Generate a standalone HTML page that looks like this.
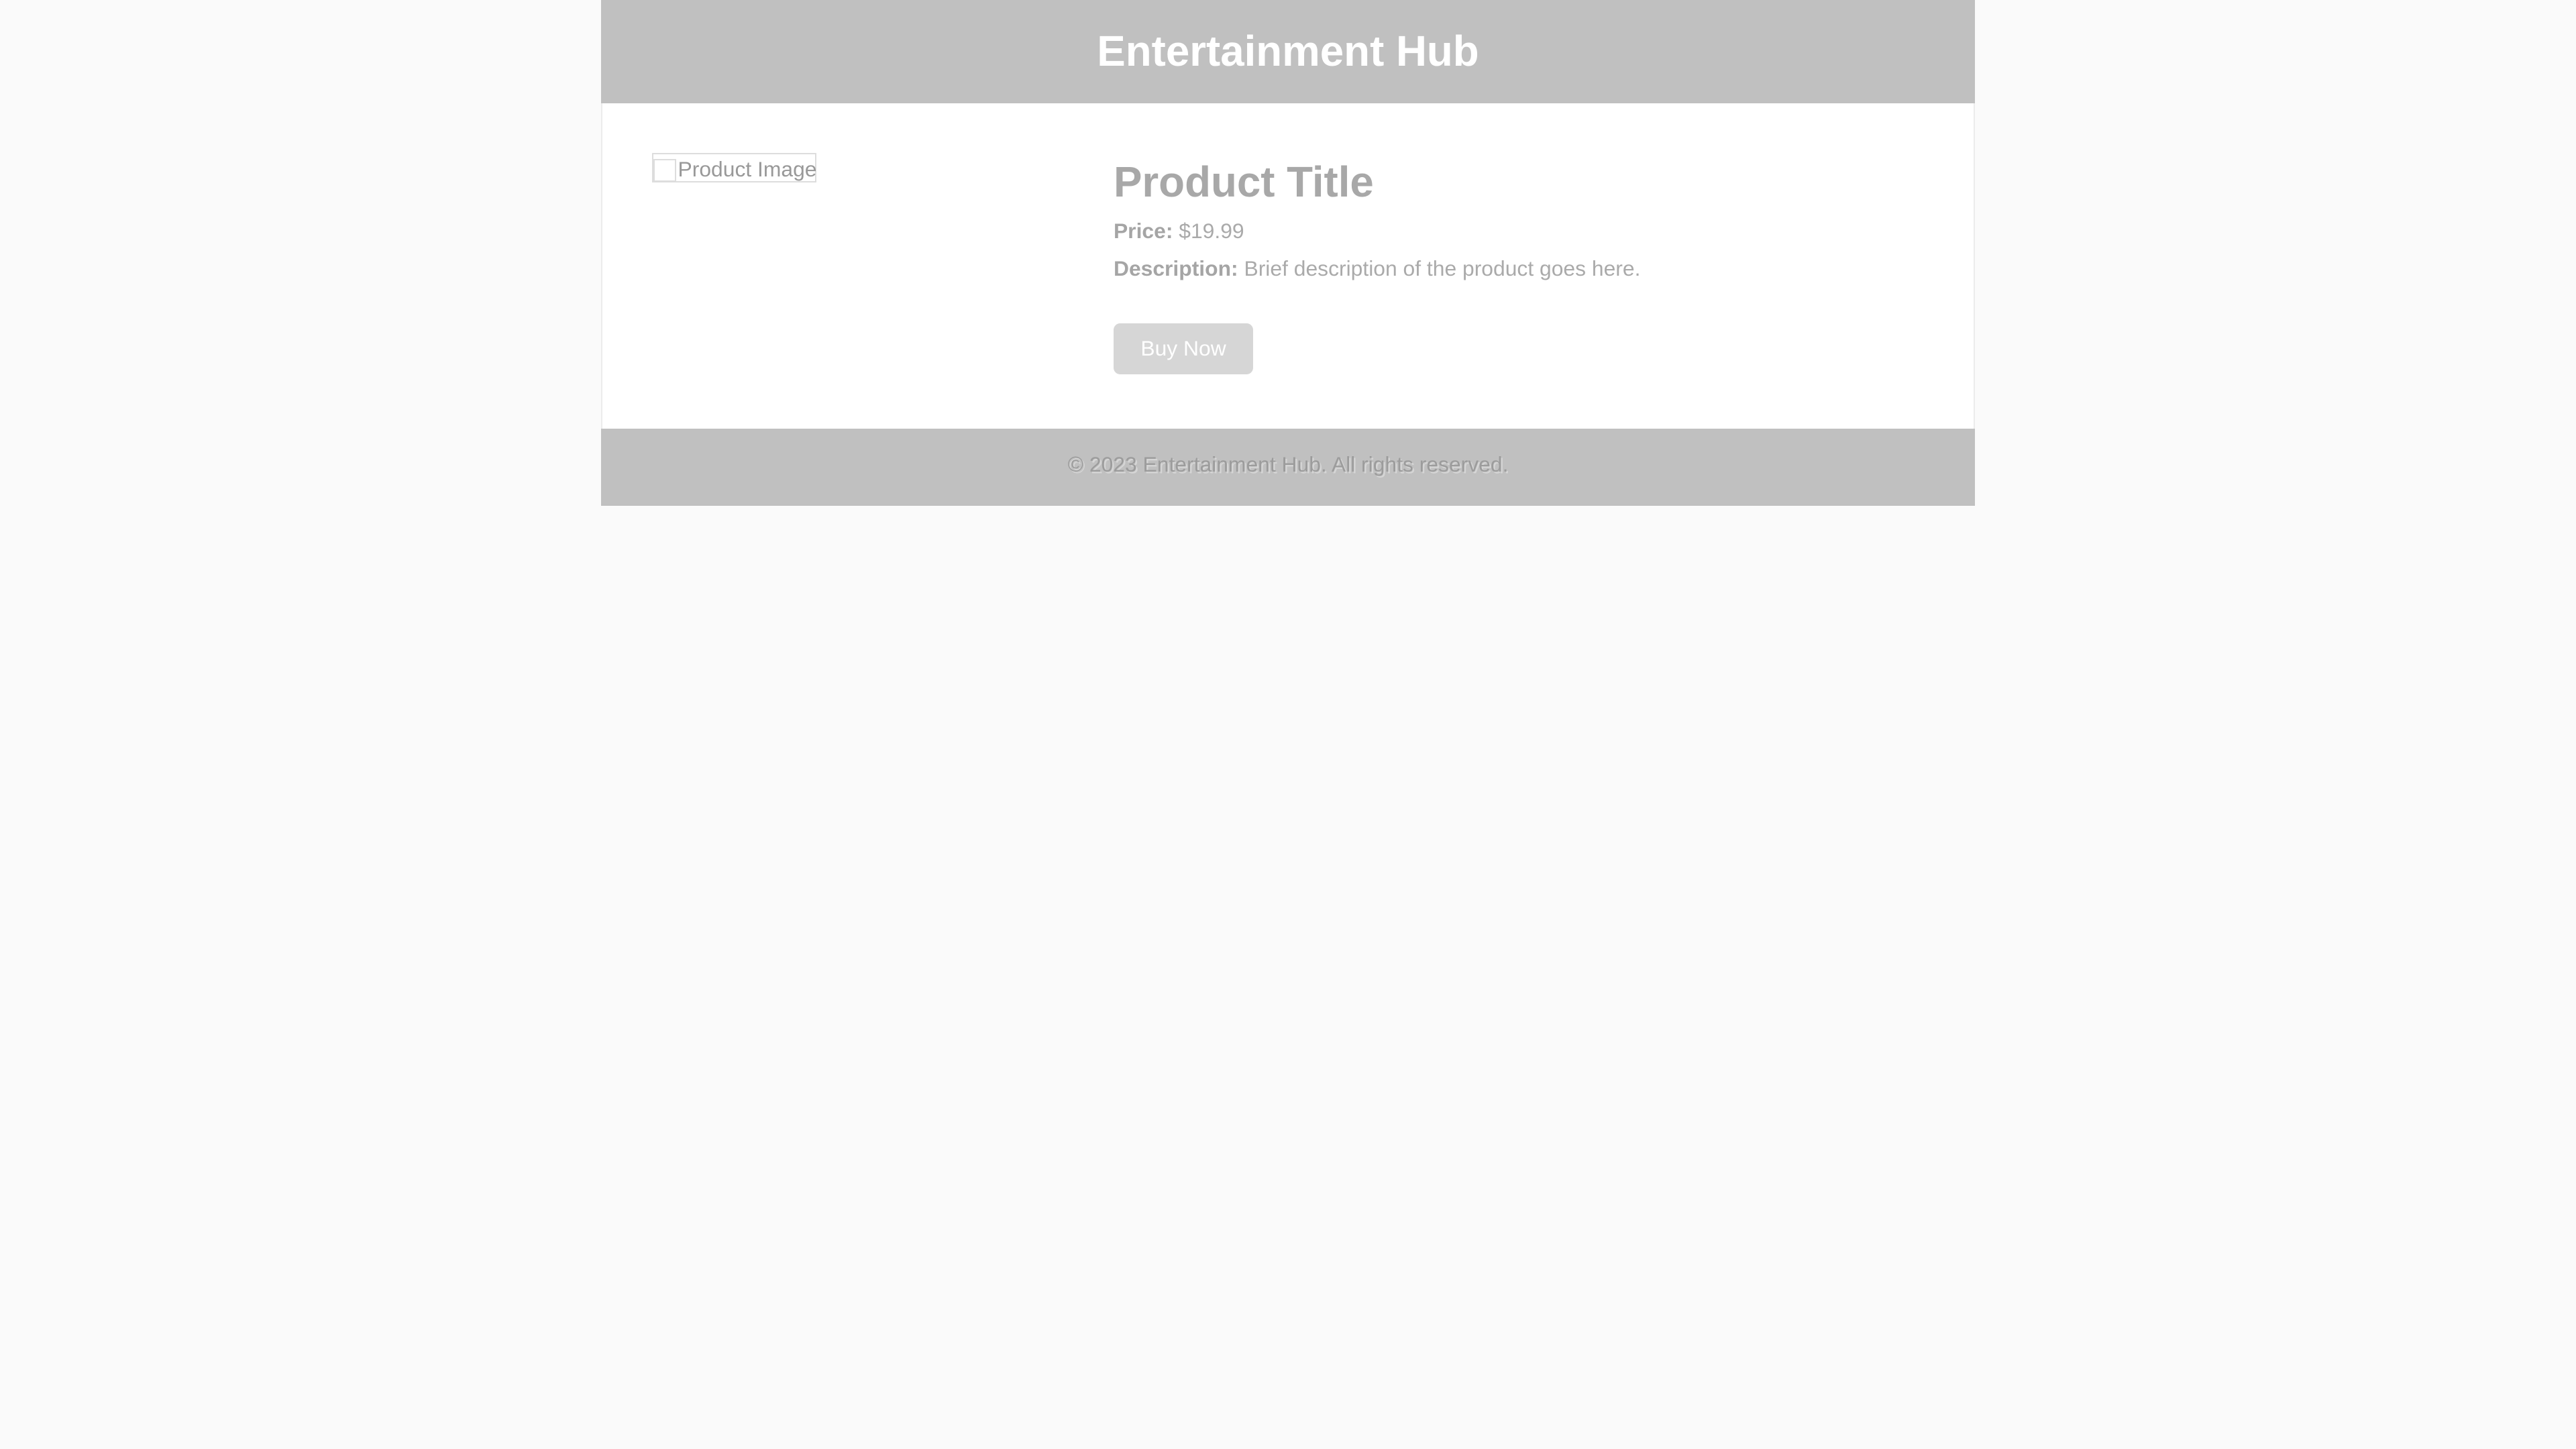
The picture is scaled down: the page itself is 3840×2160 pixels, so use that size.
<!DOCTYPE html>
<html><head><meta charset="utf-8"><style>
html,body{margin:0;padding:0;background:#fafafa;}
body{width:3840px;height:2160px;overflow:hidden;font-family:"Liberation Sans",Arial,sans-serif;}
.wrap{zoom:2.449;width:1568px;height:882px;position:relative;}
.c{position:absolute;left:366px;width:836px;top:0;}
.h{height:63px;background:#c0c0c0;color:#fff;text-align:center;font-weight:bold;font-size:26px;line-height:63px;}
.m{height:198px;background:#fff;border-left:1px solid #ececec;border-right:1px solid #ececec;box-sizing:border-box;position:relative;}
.img{position:absolute;left:30px;top:30px;width:100px;height:18px;border:1px solid #ddd;box-sizing:border-box;color:#999;font-size:13px;line-height:18px;white-space:nowrap;overflow:visible;}
.img span{display:inline-block;width:14px;height:14px;border:1px solid #ddd;vertical-align:middle;margin-right:1px;box-sizing:border-box;}
.t{position:absolute;left:311px;top:33px;font-size:26px;font-weight:bold;color:#a8a8a8;}
.p{position:absolute;left:311px;font-size:13px;color:#aaa;}
.p b{color:#a5a5a5;}
.btn{position:absolute;left:311px;top:134px;width:85px;height:31px;background:#d6d6d6;border-radius:4px;color:#fff;font-size:13px;line-height:31px;text-align:center;}
.f{height:47px;background:#c0c0c0;color:#9c9c9c;text-align:center;font-size:13px;line-height:44px;text-shadow:1px 1px 0 #d5d5d5;}
</style></head><body><div class="wrap"><div class="c">
<div class="h">Entertainment Hub</div>
<div class="m">
<div class="img"><span></span>Product Image</div>
<div class="t">Product Title</div>
<div class="p" style="top:70px"><b>Price:</b> $19.99</div>
<div class="p" style="top:93px"><b>Description:</b> Brief description of the product goes here.</div>
<div class="btn">Buy Now</div>
</div>
<div class="f">© 2023 Entertainment Hub. All rights reserved.</div>
</div></div></body></html>
